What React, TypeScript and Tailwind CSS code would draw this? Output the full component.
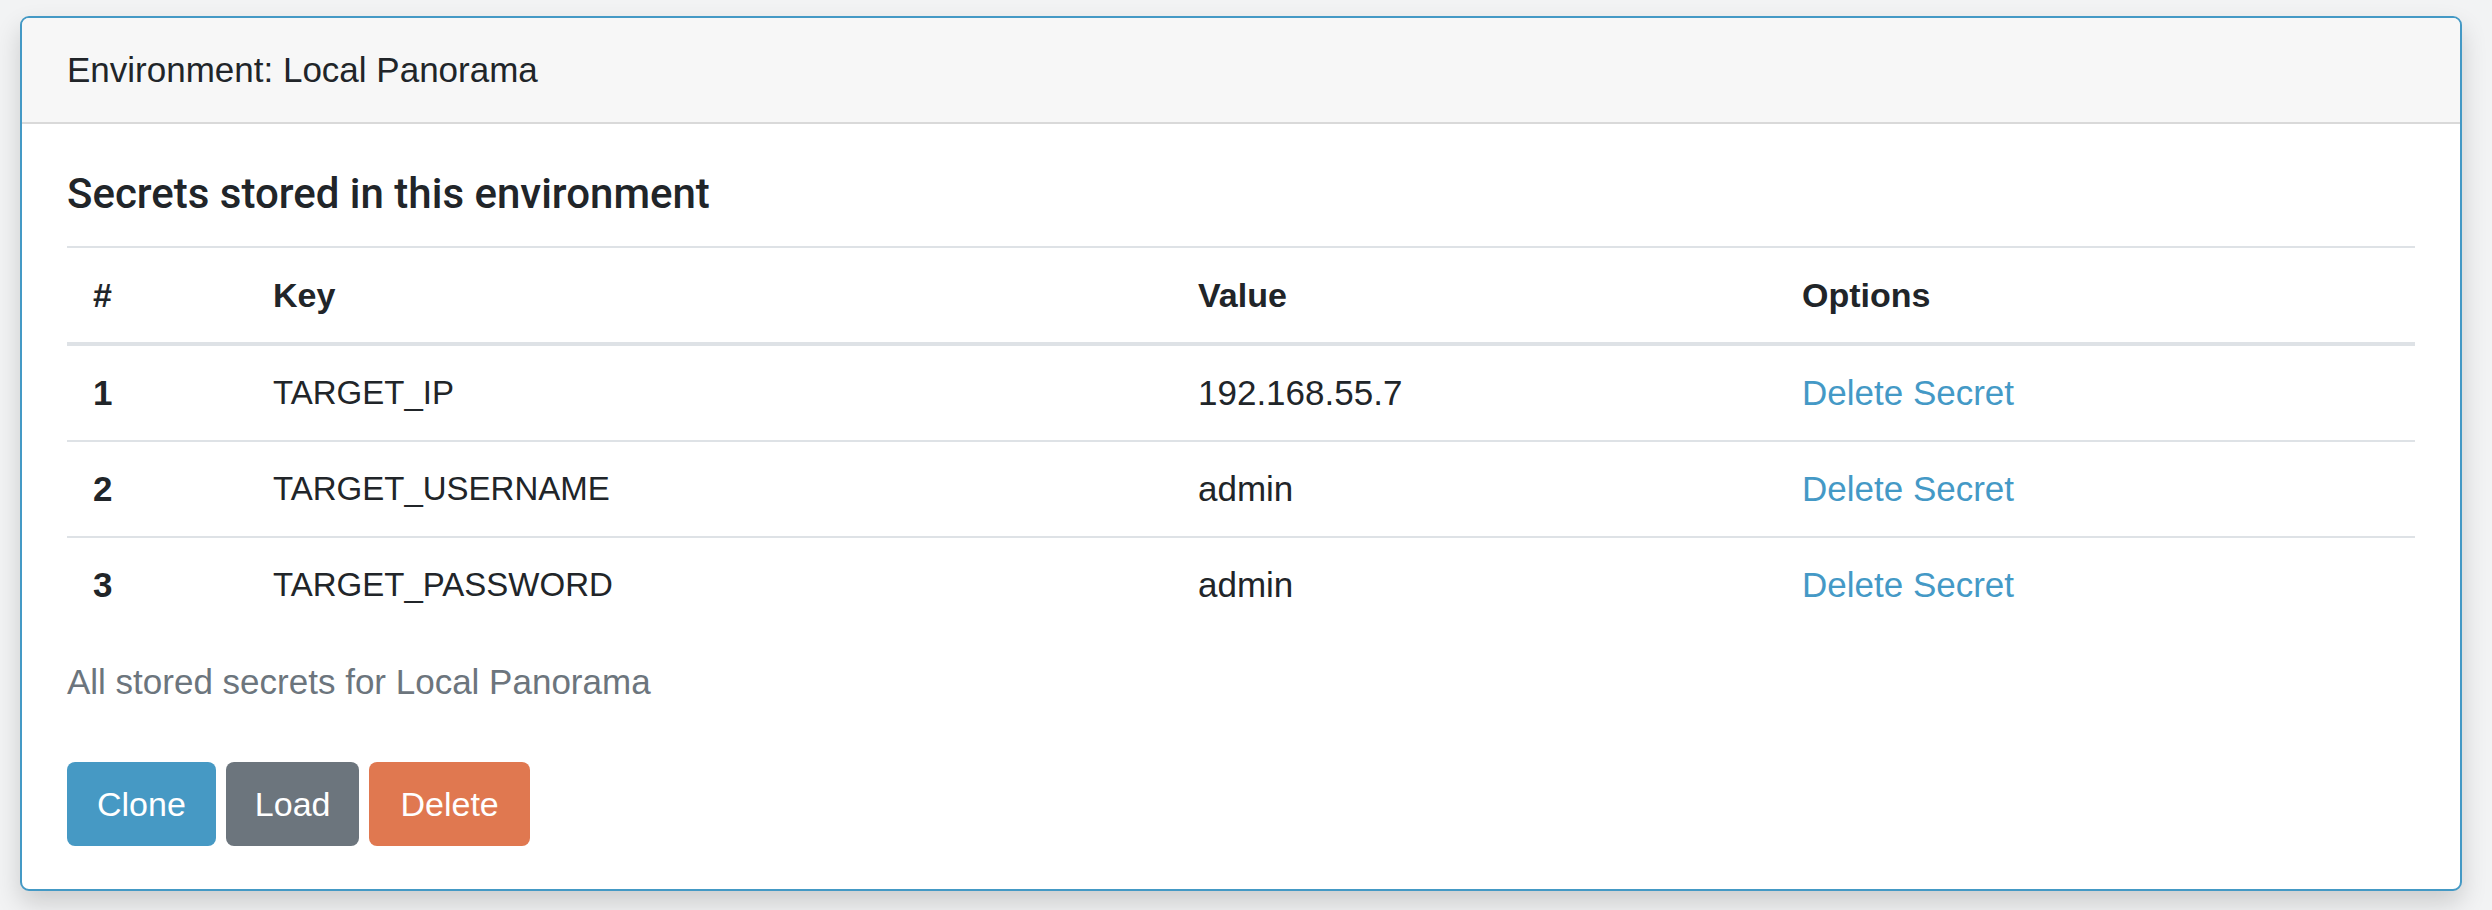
const secrets = [
  { id: 1, key: "TARGET_IP", value: "192.168.55.7" },
  { id: 2, key: "TARGET_USERNAME", value: "admin" },
  { id: 3, key: "TARGET_PASSWORD", value: "admin" },
]

const cols = "grid grid-cols-[180px_925px_604px_1fr]"

export default function App() {
  return (
    <div className="h-[910px] overflow-hidden bg-[#f2f3f4] pt-[16px] pl-[20px] font-['Liberation_Sans',Arial,sans-serif] text-[35px] text-[#212529]">
      <div className="w-[2442px] rounded-[9px] border-2 border-[#4499c5] bg-white shadow-[0_12px_26px_rgba(0,0,0,0.16)] overflow-hidden">
        {/* card header */}
        <div className="border-b-2 border-[#d9d9d9] bg-[#f7f7f7] px-[45px] py-[26px] leading-[52px]">
          Environment: Local Panorama
        </div>

        {/* card body */}
        <div className="px-[45px] pt-[44px] pb-[43px]">
          <h5 className="mb-[26px] font-['Roboto',sans-serif] text-[42px] font-medium leading-[52px]">
            Secrets stored in this environment
          </h5>

          <div className="border-t-2 border-[#dee2e6]">
            <div className={`${cols} h-[98px] border-b-4 border-[#dee2e6] text-[34px] font-bold`}>
              <div className="flex items-center px-[26px]">#</div>
              <div className="flex items-center px-[26px]">Key</div>
              <div className="flex items-center px-[26px]">Value</div>
              <div className="flex items-center px-[26px]">Options</div>
            </div>
            {secrets.map((s, i) => (
              <div key={s.id} className={`${cols} h-[94px] ${i > 0 ? "border-t-2 border-[#dee2e6] h-[96px]" : ""}`}>
                <div className="flex items-center px-[26px] font-bold">{s.id}</div>
                <div className="flex items-center px-[26px] text-[33px]">{s.key}</div>
                <div className="flex items-center px-[26px]">{s.value}</div>
                <div className="flex items-center px-[26px]">
                  <a className="cursor-pointer text-[#4499c6]">Delete Secret</a>
                </div>
              </div>
            ))}
          </div>

          <div className="pt-[24px] leading-[52px] text-[#6c757d]">All stored secrets for Local Panorama</div>

          <div className="mt-[54px] flex gap-[10px] text-[34px]">
            <button className="h-[84px] rounded-[8px] bg-[#4699c4] px-[30px] text-white">Clone</button>
            <button className="h-[84px] rounded-[8px] bg-[#6c757d] px-[29px] text-white">Load</button>
            <button className="h-[84px] rounded-[8px] bg-[#e07850] px-[31px] text-white">Delete</button>
          </div>
        </div>
      </div>
    </div>
  )
}
